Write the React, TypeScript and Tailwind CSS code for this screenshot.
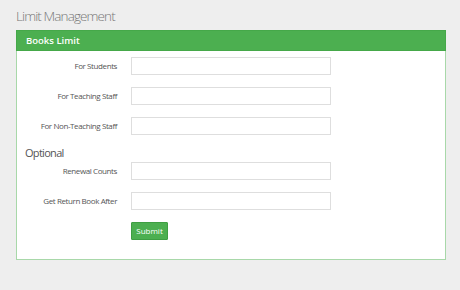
import React from "react";

const rows = ["For Students", "For Teaching Staff", "For Non-Teaching Staff"];
const optionalRows = ["Renewal Counts", "Get Return Book After"];

const Field = ({ label }: { label: string }) => (
  <div className="flex items-center">
    <label className="w-[100px] text-right text-[8px] tracking-[-0.4px] text-[#555]">{label}</label>
    <input
      type="text"
      className="ml-[14px] h-[18px] w-[200px] border border-[#dedede] bg-white outline-none"
    />
  </div>
);

const App = () => {
  return (
    <div
      className="min-h-[290px] w-[460px] bg-[#eeeeee] px-4 pt-[7px]"
      style={{ fontFamily: '"Open Sans", sans-serif' }}
    >
      <h1 className="text-[13.5px] font-light leading-[18px] tracking-[-0.9px] text-[#777]">
        Limit Management
      </h1>
      <div className="mt-[5px] w-[430px] border border-[#a8d8a9] bg-white">
        <div className="-mx-px -mt-px h-[21px] border border-[#45a849] bg-[#4caf50] px-[9px] text-[9.5px] font-semibold leading-[19px] text-white">
          Books Limit
        </div>
        <div className="flex flex-col pb-[19px] pt-[6px]">
          <div className="flex flex-col gap-[12px]">
            {rows.map((r) => (
              <Field key={r} label={r} />
            ))}
          </div>
          <p className="ml-[8px] mt-[10px] text-[11px] leading-[16px] tracking-[-0.7px] text-[#555]">
            Optional
          </p>
          <div className="mt-px flex flex-col gap-[12px]">
            {optionalRows.map((r) => (
              <Field key={r} label={r} />
            ))}
          </div>
          <div className="ml-[114px] mt-[12px] flex">
            <button className="h-[18px] w-[37px] rounded-[1px] border border-[#3e9e42] bg-[#4caf50] text-[8px] leading-[16px] text-white">
              Submit
            </button>
          </div>
        </div>
      </div>
    </div>
  );
};

export default App;
